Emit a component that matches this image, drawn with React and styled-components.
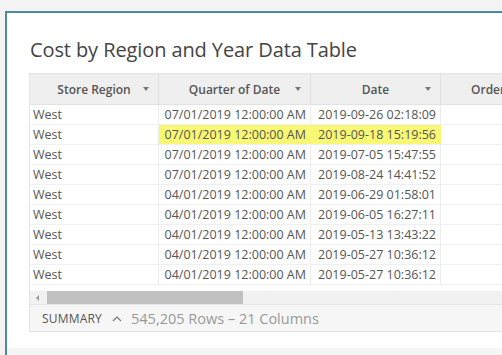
import styled, { createGlobalStyle } from "styled-components";

const GlobalStyle = createGlobalStyle`
  html, body {
    margin: 0;
    padding: 0;
    background: #f3f3f3;
  }
  body {
    font-family: "Open Sans", "Noto Sans", Arial, sans-serif;
  }
`;

const Page = styled.div`
  width: 502px;
  height: 355px;
  overflow: hidden;
  background: #f3f3f3;
  padding: 11px 0 0 5px;
  box-sizing: border-box;
`;

const Card = styled.div`
  width: 620px;
  height: 360px;
  border-top: 2px solid #4b8b9b;
  border-left: 2px solid #4b8b9b;
  background: #f5f5f5;
  display: flex;
  flex-direction: column;
`;

const Panel = styled.div`
  background: #fff;
  height: 335px;
  padding: 24px 0 0 22px;
  box-sizing: border-box;
`;

const Title = styled.h1`
  margin: 0 0 10px 1px;
  font-size: 20px;
  font-weight: 400;
  line-height: 26px;
  color: #444;
  letter-spacing: -0.1px;
`;

const Table = styled.div`
  width: 600px;
  border-left: 1px solid #e4e4e4;
  border-top: 1px solid #e4e4e4;
`;

const Row = styled.div`
  display: grid;
  grid-template-columns: 129px 152px 130px 1fr;
  height: ${(p) => (p.$header ? "31px" : "20px")};
  background: ${(p) => (p.$header ? "#efefef" : "#fff")};
  border-bottom: 1px solid ${(p) => (p.$header ? "#e2e2e2" : "#f0f0f0")};
  box-sizing: border-box;
`;

const HeadCell = styled.div`
  position: relative;
  display: flex;
  align-items: center;
  font-size: 12px;
  font-weight: 600;
  color: #555;
  white-space: nowrap;
  border-right: 1px solid #e0e0e0;
  justify-content: ${(p) => (p.$left ? "flex-start" : "center")};
  padding-left: ${(p) => (p.$left ? "30px" : "0")};
`;

const Caret = styled.span`
  position: absolute;
  right: 9px;
  top: 13px;
  width: 0;
  height: 0;
  border-left: 3.5px solid transparent;
  border-right: 3.5px solid transparent;
  border-top: 4px solid #777;
`;

const Cell = styled.div`
  display: flex;
  align-items: center;
  justify-content: ${(p) => (p.$right ? "flex-end" : "flex-start")};
  padding: 0 ${(p) => (p.$right ? "4px" : "3px")};
  font-size: 12.5px;
  color: #555;
  white-space: nowrap;
  border-right: 1px solid #ececec;
  background: ${(p) => (p.$mark ? "#f8f874" : "transparent")};
  border-right-color: ${(p) => (p.$mark ? "#f8f874" : "#ececec")};
`;

const ScrollRow = styled.div`
  display: flex;
  align-items: flex-end;
  height: 20px;
  background: #fff;
  border-bottom: 1px solid #e6e6e6;
  box-sizing: border-box;
`;

const Track = styled.div`
  display: flex;
  align-items: center;
  width: 100%;
  height: 13px;
  background: #f1f1f1;
`;

const Arrow = styled.span`
  width: 0;
  height: 0;
  margin: 0 8px 0 6px;
  border-top: 3px solid transparent;
  border-bottom: 3px solid transparent;
  border-right: 3px solid #999;
`;

const Thumb = styled.div`
  width: 196px;
  height: 13px;
  background: #c1c1c1;
`;

const Summary = styled.div`
  display: flex;
  align-items: center;
  height: 27px;
  padding-left: 12px;
  background: #f6f6f6;
  border-bottom: 1px solid #e2e2e2;
  box-sizing: border-box;
`;

const SummaryLabel = styled.span`
  font-size: 12px;
  color: #555;
  letter-spacing: 0.2px;
`;

const Chevron = styled.svg`
  margin: 0 9px 0 10px;
`;

const Counts = styled.span`
  font-size: 14.5px;
  color: #999;
`;

const rows = [
  ["07/01/2019 12:00:00 AM", "2019-09-26 02:18:09"],
  ["07/01/2019 12:00:00 AM", "2019-09-18 15:19:56", true],
  ["07/01/2019 12:00:00 AM", "2019-07-05 15:47:55"],
  ["07/01/2019 12:00:00 AM", "2019-08-24 14:41:52"],
  ["04/01/2019 12:00:00 AM", "2019-06-29 01:58:01"],
  ["04/01/2019 12:00:00 AM", "2019-06-05 16:27:11"],
  ["04/01/2019 12:00:00 AM", "2019-05-13 13:43:22"],
  ["04/01/2019 12:00:00 AM", "2019-05-27 10:36:12"],
  ["04/01/2019 12:00:00 AM", "2019-05-27 10:36:12"],
];

export default function App() {
  return (
    <Page>
      <GlobalStyle />
      <Card>
        <Panel>
          <Title>Cost by Region and Year Data Table</Title>
          <Table>
            <Row $header>
              <HeadCell>
                Store Region
                <Caret />
              </HeadCell>
              <HeadCell>
                Quarter of Date
                <Caret />
              </HeadCell>
              <HeadCell>
                Date
                <Caret />
              </HeadCell>
              <HeadCell $left>Order Date</HeadCell>
            </Row>
            {rows.map(([q, d, mark], i) => (
              <Row key={i}>
                <Cell>West</Cell>
                <Cell $right $mark={mark}>
                  {q}
                </Cell>
                <Cell $right $mark={mark}>
                  {d}
                </Cell>
                <Cell />
              </Row>
            ))}
            <ScrollRow>
              <Track>
                <Arrow />
                <Thumb />
              </Track>
            </ScrollRow>
            <Summary>
              <SummaryLabel>SUMMARY</SummaryLabel>
              <Chevron width="10" height="7" viewBox="0 0 10 7">
                <path d="M1 6 L5 2 L9 6" fill="none" stroke="#777" strokeWidth="1.2" />
              </Chevron>
              <Counts>545,205 Rows – 21 Columns</Counts>
            </Summary>
          </Table>
        </Panel>
      </Card>
    </Page>
  );
}
